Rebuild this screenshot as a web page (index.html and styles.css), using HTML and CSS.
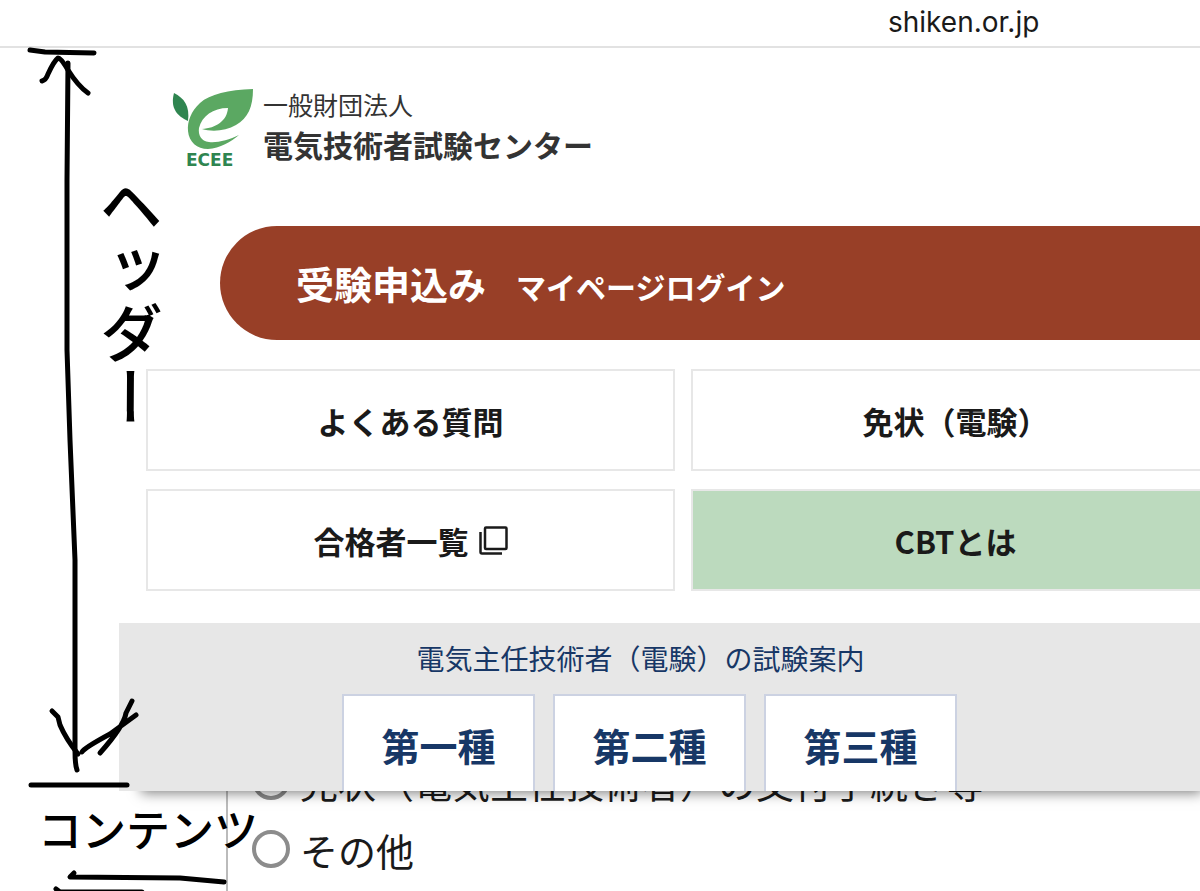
FILE: index.html
```html
<!DOCTYPE html>
<html lang="ja">
<head>
    <meta charset="UTF-8">
    <meta name="viewport" content="width=device-width, initial-scale=1.0">
    <title>電気技術者試験センター</title>
    <link rel="stylesheet" href="styles.css">
</head>
<body>
    <div class="address-bar">shiken.or.jp</div>

    <header class="site-header">
        <a href="#" class="brand">
            <span class="brand-mark">
                <svg class="brand-leaf" viewBox="170 88 86 64" aria-hidden="true">
                    <path fill="#2f8550" d="M174 93C184 98 190 106 188 121C177 116 170 108 174 93Z"/>
                    <path fill="#5ba862" d="M253 89C228 90 210 94 200 103C191 111 187 122 188 131C189 142 197 149 208 149C220 148 231 142 239 135C229 140 217 143 209 142C201 141 198 135 199 128C202 116 213 108 228 108C227 121 216 128 202 129C212 132 226 131 236 125C248 118 253 107 253 89Z"/>
                </svg>
                <span class="brand-code">ECEE</span>
            </span>
            <span class="brand-text">
                <span class="brand-type">一般財団法人</span>
                <span class="brand-name">電気技術者試験センター</span>
            </span>
        </a>

        <a href="#" class="login-btn">
            <span class="login-main">受験申込み</span>
            <span class="login-sub">マイページログイン</span>
        </a>

        <nav class="main-nav">
            <a href="#" class="nav-btn">よくある質問</a>
            <a href="#" class="nav-btn">免状（電験）</a>
            <a href="#" class="nav-btn">合格者一覧
                <svg class="window-icon" viewBox="0 0 29 29" aria-hidden="true">
                    <rect x="6" y="1.5" width="21.5" height="21.5" rx="1"/>
                    <path d="M1.5 6V26Q1.5 27.5 3 27.5H23"/>
                </svg>
            </a>
            <a href="#" class="nav-btn nav-btn-green">CBTとは</a>
        </nav>

        <section class="guide">
            <div class="guide-group">
                <h2>電気主任技術者（電験）の試験案内</h2>
                <div class="guide-links">
                    <a href="#">第一種</a>
                    <a href="#">第二種</a>
                    <a href="#">第三種</a>
                </div>
            </div>
        </section>
    </header>

    <main class="contents">
        <form class="inquiry">
            <label class="choice"><input type="radio" name="kind">免状（電気主任技術者）の交付手続き等</label>
            <label class="choice"><input type="radio" name="kind">その他</label>
        </form>
    </main>

    <!-- 手書きの注釈 -->
    <div class="notes">
        <svg class="ink" width="280" height="891" viewBox="0 0 280 891" aria-hidden="true">
            <path d="M30 50L45 52L94 53"/>
            <path d="M42 81Q46 80 48 74Q54 61 58 58Q61 58 68 70Q78 86 88 93"/>
            <path d="M68 63L67 180V350L70 440L75 560V750Q75 765 77 770"/>
            <path d="M52 711L58 717L60 725Q66 739 78 754"/>
            <path d="M82 752Q84 748 110 734L136 715M132 701L126 713Q124 726 100 753"/>
            <path d="M31 785H127"/>
            <path d="M74 873L70 877L180 878L224 882"/>
            <path d="M56 889L60 892H142"/>
        </svg>
        <span class="note note-header">ヘッダー</span>
        <span class="note note-contents">コンテンツ</span>
    </div>
</body>
</html>
```

FILE: styles.css
```css
:root {
    --text-color: #1a1a1a;
    --navy: #173766;
    --brown: #983f27;
    --green: #bcdabe;
    --gray: #e7e7e7;
}

* {
    box-sizing: border-box;
    margin: 0;
    padding: 0;
}

html {
    overflow: hidden;
}

body {
    position: relative;
    font-family: "Noto Sans CJK JP", sans-serif;
    color: var(--text-color);
    background: #fff;
    min-height: 100vh;
    overflow: hidden;
}

a {
    color: inherit;
    text-decoration: none;
}

.address-bar {
    height: 48px;
    padding-left: 74%;
    border-bottom: 2px solid #e2e2e2;
    font-family: Inter, sans-serif;
    font-size: 28px;
    line-height: 44px;
}

.site-header {
    position: relative;
    z-index: 1;
    margin-left: 119px;
    padding-top: 40px;
    background: #fff;
    box-shadow: 12px 12px 12px -10px rgba(0, 0, 0, 0.5);
}

/* ロゴ */
.brand {
    display: flex;
    gap: 7px;
    height: 80px;
    margin-left: 51px;
}

.brand-mark {
    width: 86px;
}

.brand-leaf {
    display: block;
    width: 86px;
    height: 64px;
}

.brand-code {
    display: block;
    padding-left: 16px;
    font-family: "DejaVu Sans", sans-serif;
    font-size: 17px;
    font-weight: bold;
    line-height: 16px;
    color: #2f8550;
}

.brand-text {
    display: flex;
    flex-direction: column;
    color: #333;
}

.brand-type {
    font-size: 25px;
    font-weight: 400;
    line-height: 32px;
}

.brand-name {
    font-size: 30px;
    font-weight: bold;
    line-height: 48px;
}

/* ログイン */
.login-btn {
    display: flex;
    align-items: baseline;
    gap: 30px;
    height: 114px;
    margin: 58px 0 29px 101px;
    padding-left: 76px;
    border-radius: 57px 0 0 57px;
    background: var(--brown);
    color: #fff;
    line-height: 114px;
}

.login-main {
    font-size: 38px;
    font-weight: bold;
}

.login-sub {
    font-size: 30px;
    font-weight: bold;
}

/* メニュー */
.main-nav {
    display: grid;
    grid-template-columns: 1fr 1fr;
    gap: 18px 16px;
    margin: 0 -20px 32px 27px;
}

.nav-btn {
    display: flex;
    align-items: center;
    justify-content: center;
    gap: 10px;
    height: 102px;
    border: 2px solid var(--gray);
    background: #fff;
    font-size: 31px;
    font-weight: bold;
}

.nav-btn-green {
    background: var(--green);
}

.window-icon {
    width: 29px;
    height: 29px;
    fill: none;
    stroke: var(--text-color);
    stroke-width: 2.5;
}

/* 試験案内 */
.guide {
    display: flex;
    height: 168px;
    padding-left: 205px;
    background: var(--gray);
    color: var(--navy);
    overflow: hidden;
}

.guide h2 {
    font-size: 28px;
    font-weight: 400;
    line-height: 71px;
    text-align: center;
}

.guide-links {
    display: flex;
}

.guide-links a {
    width: 193px;
    height: 110px;
    margin-left: 18px;
    border: 2px solid #ccd2e2;
    background: #fff;
    font-size: 38px;
    font-weight: bold;
    line-height: 98px;
    text-align: center;
}

/* ヘッダーの下に隠れるコンテンツ */
.contents {
    margin: -60px 0 0 226px;
}

.inquiry {
    padding: 16px 0 20px 24px;
    border-left: 2px solid #bbb;
}

.choice {
    display: flex;
    align-items: center;
    gap: 10px;
    height: 68px;
    font-size: 38px;
}

.choice input {
    appearance: none;
    width: 38px;
    height: 38px;
    border: 4px solid #8c8c8c;
    border-radius: 50%;
    background: #fff;
}

/* 注釈 */
.notes {
    position: absolute;
    z-index: 2;
    top: 0;
    left: 0;
    color: #000;
    pointer-events: none;
}

.ink {
    display: block;
    fill: none;
    stroke: #000;
    stroke-width: 5;
    stroke-linecap: round;
    stroke-linejoin: round;
}

.note {
    position: absolute;
    font-weight: 500;
    white-space: nowrap;
}

.note-header {
    top: 173px;
    left: 98px;
    font-size: 64px;
    line-height: 66px;
    writing-mode: vertical-rl;
}

.note-contents {
    top: 804px;
    left: 38px;
    font-size: 44px;
    line-height: 48px;
}
```
